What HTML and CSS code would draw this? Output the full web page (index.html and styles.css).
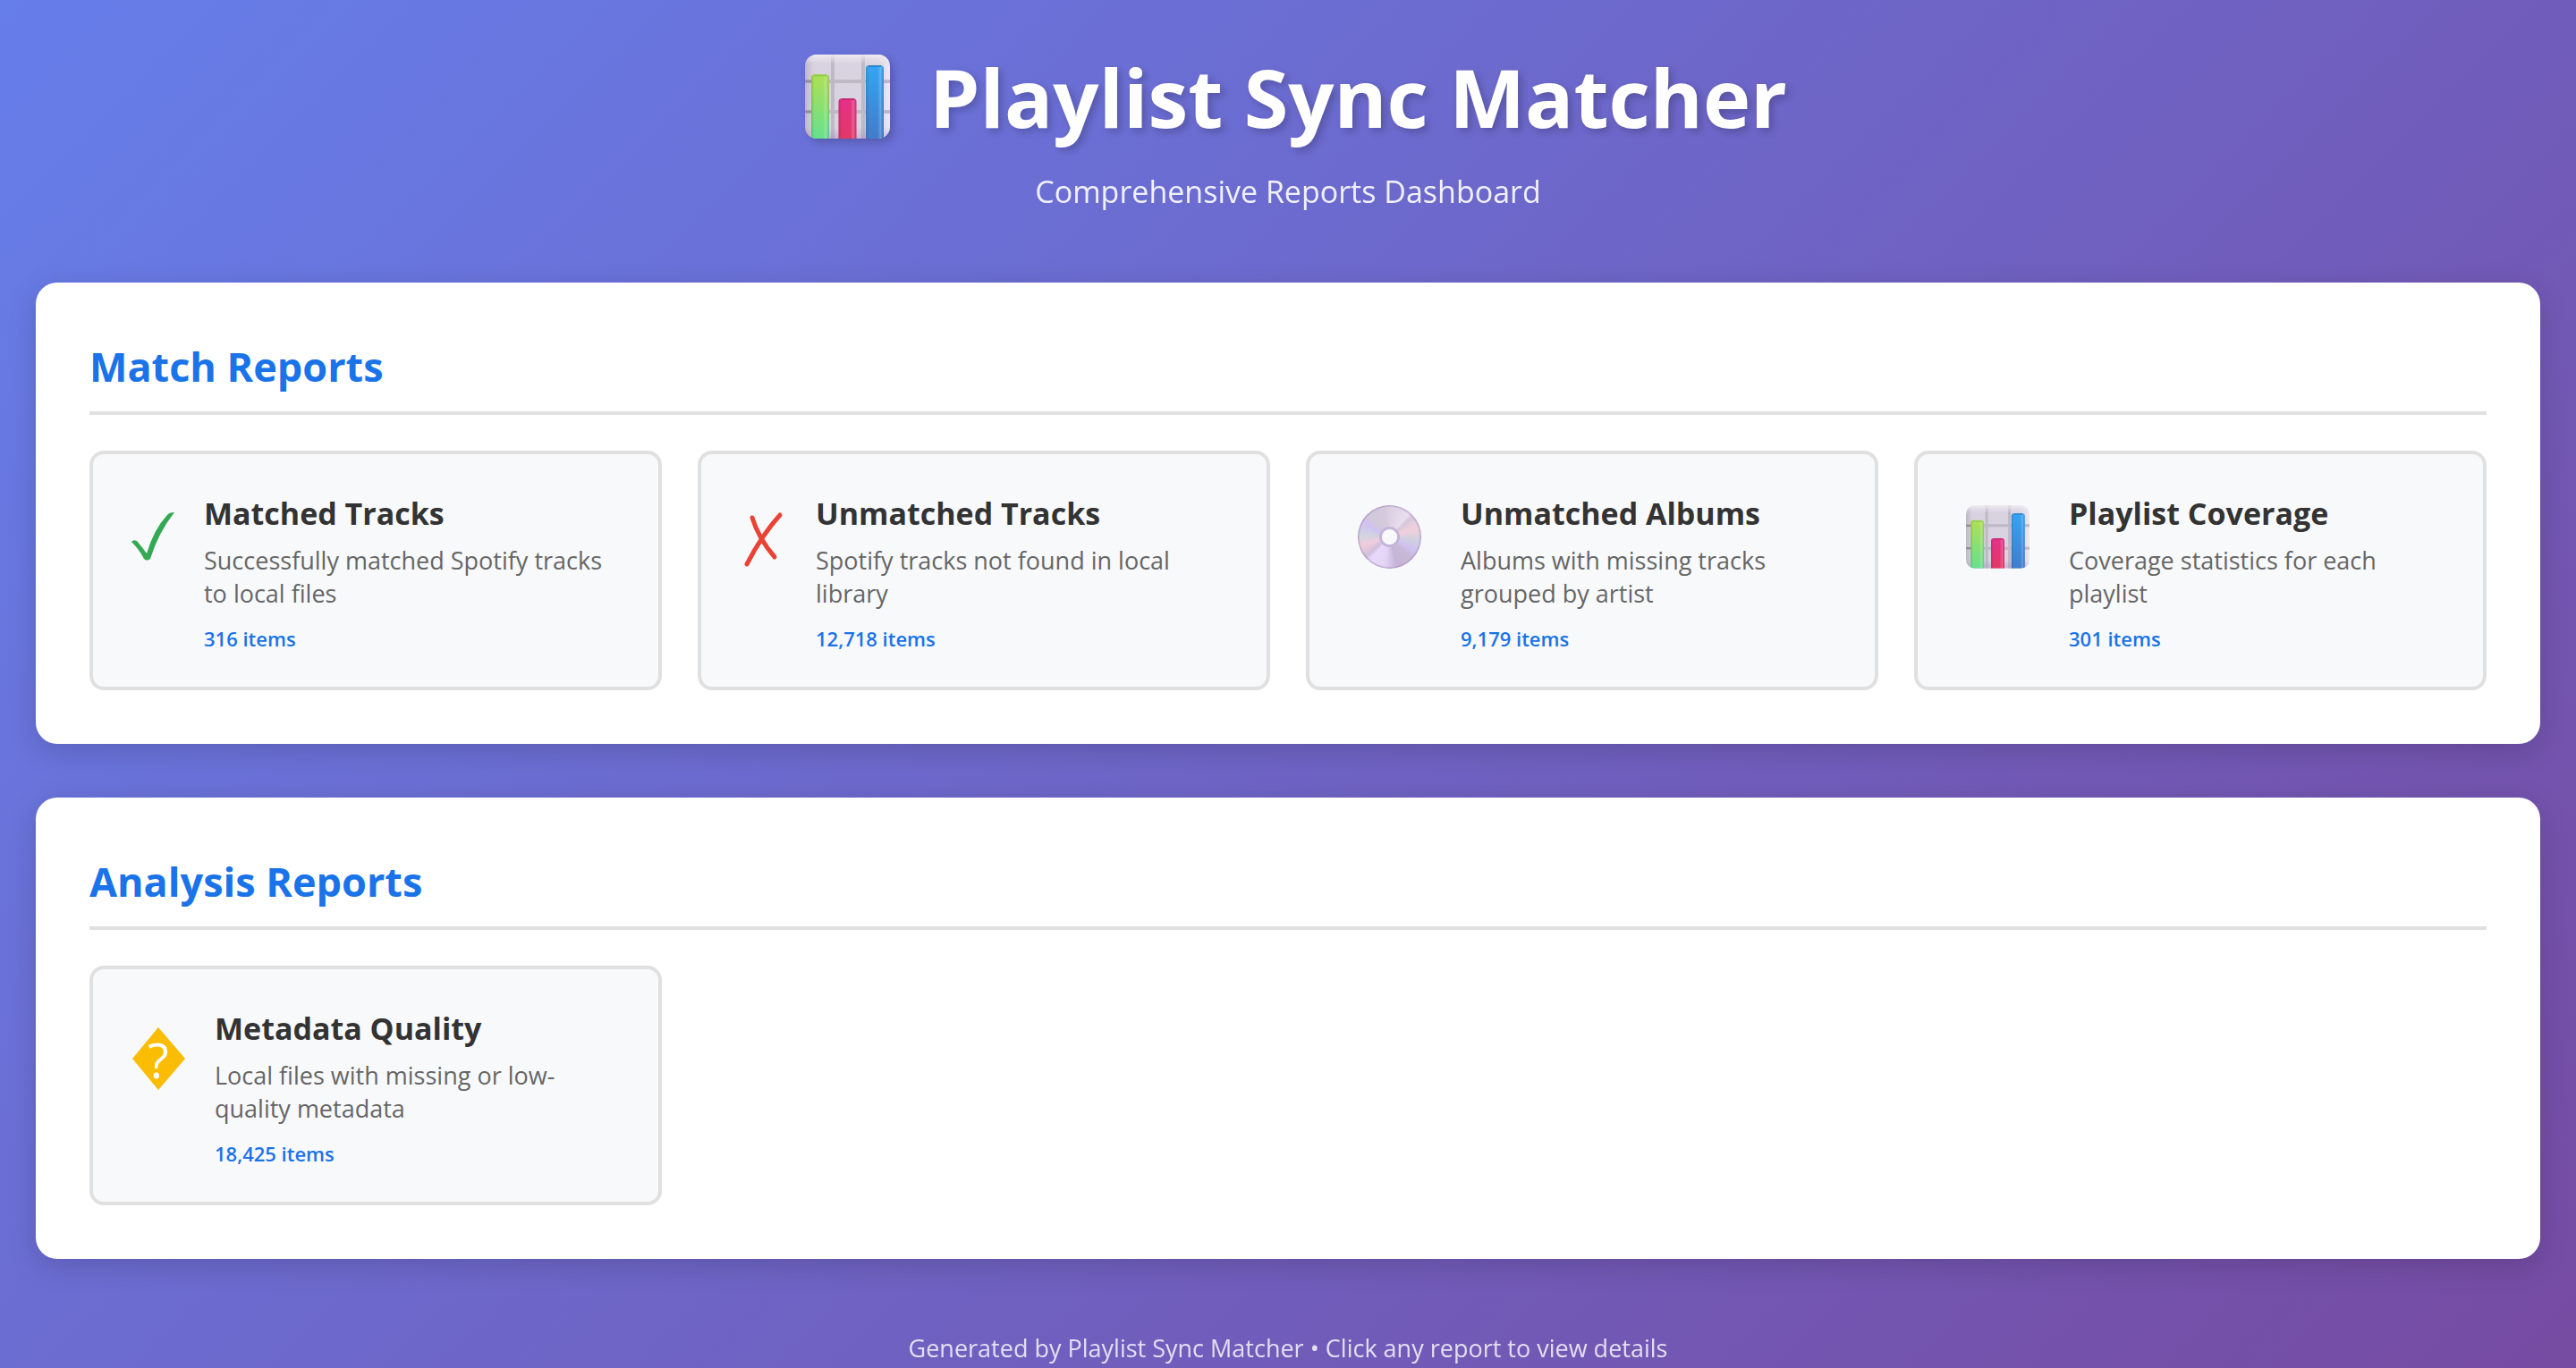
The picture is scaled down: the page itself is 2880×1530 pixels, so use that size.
FILE: index.html
```html
<!DOCTYPE html>
<html lang="en">
<head>
<meta charset="utf-8">
<meta name="viewport" content="width=device-width, initial-scale=1">
<title>Playlist Sync Matcher</title>
<link rel="stylesheet" href="styles.css">
</head>
<body>
<svg class="defs" aria-hidden="true">
  <defs>
    <linearGradient id="panel" x1="0" x2="1" y1="0" y2="0"><stop offset="0" stop-color="#bdb6c6"/><stop offset=".1" stop-color="#d8d2e0"/><stop offset=".85" stop-color="#dad4e2"/><stop offset="1" stop-color="#eee8f2"/></linearGradient>
    <linearGradient id="shine" x1="0" x2="0" y1="0" y2="1"><stop offset="0" stop-color="#f4f1f6" stop-opacity=".8"/><stop offset=".12" stop-color="#e8e4ec" stop-opacity="0"/><stop offset=".86" stop-color="#9a6cc0" stop-opacity="0"/><stop offset="1" stop-color="#9a6cc0" stop-opacity=".3"/></linearGradient>
    <linearGradient id="green" x1="0" x2="0" y1="0" y2="1"><stop offset="0" stop-color="#b0df55"/><stop offset="1" stop-color="#66e08e"/></linearGradient>
    <linearGradient id="pink" x1="0" x2="0" y1="0" y2="1"><stop offset="0" stop-color="#e6308a"/><stop offset="1" stop-color="#e23866"/></linearGradient>
    <linearGradient id="blue" x1="0" x2="0" y1="0" y2="1"><stop offset="0" stop-color="#35a4f4"/><stop offset="1" stop-color="#407ccc"/></linearGradient>
    <linearGradient id="edge" x1="0" x2="1" y1="0" y2="0"><stop offset="0" stop-color="#000" stop-opacity=".14"/><stop offset=".18" stop-color="#000" stop-opacity="0"/><stop offset=".65" stop-color="#fff" stop-opacity="0"/><stop offset=".84" stop-color="#fff" stop-opacity=".22"/><stop offset="1" stop-color="#000" stop-opacity=".08"/></linearGradient>
    <clipPath id="tile"><rect width="95" height="94" rx="13"/></clipPath>
  </defs>
  <symbol id="chart" viewBox="0 0 95 94">
    <g clip-path="url(#tile)">
      <rect width="95" height="94" fill="url(#panel)"/>
      <path d="M31 0v94M65 0v94M0 30h95M0 64h95" stroke="#bfb9c5" stroke-width="4" fill="none"/>
      <path d="M0 30h8M0 64h8" stroke="#948e9a" stroke-width="3"/>
      <rect width="95" height="94" fill="url(#shine)"/>
      <path d="M7 94V26q0-4 4-4h12q4 0 4 4v68z" fill="url(#green)"/>
      <path d="M7 94V26q0-4 4-4h12q4 0 4 4v68z" fill="url(#edge)"/>
      <path d="M10 23.500h14" stroke="#8ccc50" stroke-width="2"/>
      <path d="M37.500 94V53q0-4 4-4h12q4 0 4 4v41z" fill="url(#pink)"/>
      <path d="M37.500 94V53q0-4 4-4h12q4 0 4 4v41z" fill="url(#edge)"/>
      <path d="M41 50h14" stroke="#c02a6c" stroke-width="2"/>
      <path d="M68 94V16q0-4 4-4h12q4 0 4 4v78z" fill="url(#blue)"/>
      <path d="M68 94V16q0-4 4-4h12q4 0 4 4v78z" fill="url(#edge)"/>
      <path d="M71 13h14" stroke="#2c86cc" stroke-width="2"/>
    </g>
  </symbol>
</svg>

<header class="header">
  <h1 class="title"><svg class="title-icon" aria-hidden="true"><use href="#chart"/></svg>Playlist Sync Matcher</h1>
  <p class="subtitle">Comprehensive Reports Dashboard</p>
</header>

<main class="sections">
  <section class="section">
    <h2 class="section-title">Match Reports</h2>
    <div class="grid">
      <a class="card" href="#matched-tracks">
        <svg class="icon icon-check" viewBox="0 0 54 104" aria-hidden="true"><path d="M3 58Q5 55 9 57Q15 64 20 71Q28 44 43 28Q45 25 51 25Q33 48 24 77Q20 80 17 77Q12 67 3 58z" fill="#34a853"/></svg>
        <div class="card-body">
          <h3 class="card-title">Matched Tracks</h3>
          <p class="card-text">Successfully matched Spotify tracks to local files</p>
          <p class="card-count">316 items</p>
        </div>
      </a>
      <a class="card" href="#unmatched-tracks">
        <svg class="icon icon-cross" viewBox="0 0 58 104" aria-hidden="true"><path d="M17 31Q24 54 42 75M48 28Q28 50 11 83" fill="none" stroke="#ea4335" stroke-width="5" stroke-linecap="round"/></svg>
        <div class="card-body">
          <h3 class="card-title">Unmatched Tracks</h3>
          <p class="card-text">Spotify tracks not found in local library</p>
          <p class="card-count">12,718 items</p>
        </div>
      </a>
      <a class="card" href="#unmatched-albums">
        <span class="icon icon-wide"><span class="disc"></span></span>
        <div class="card-body">
          <h3 class="card-title">Unmatched Albums</h3>
          <p class="card-text">Albums with missing tracks grouped by artist</p>
          <p class="card-count">9,179 items</p>
        </div>
      </a>
      <a class="card" href="#playlist-coverage">
        <span class="icon icon-wide"><svg class="chart" aria-hidden="true"><use href="#chart"/></svg></span>
        <div class="card-body">
          <h3 class="card-title">Playlist Coverage</h3>
          <p class="card-text">Coverage statistics for each playlist</p>
          <p class="card-count">301 items</p>
        </div>
      </a>
    </div>
  </section>

  <section class="section">
    <h2 class="section-title">Analysis Reports</h2>
    <div class="grid">
      <a class="card" href="#metadata-quality">
        <svg class="icon icon-unknown" viewBox="0 0 66 104" aria-hidden="true"><path d="M33 25L63 60L33 95L4 60z" fill="#fbbc04"/><text class="mark" x="33" y="82" text-anchor="middle">?</text></svg>
        <div class="card-body">
          <h3 class="card-title">Metadata Quality</h3>
          <p class="card-text">Local files with missing or low-quality metadata</p>
          <p class="card-count">18,425 items</p>
        </div>
      </a>
    </div>
  </section>
</main>

<footer class="footer">Generated by Playlist Sync Matcher • Click any report to view details</footer>
</body>
</html>
```
FILE: styles.css
```css
* {
  box-sizing: border-box;
  margin: 0;
  padding: 0;
}

body {
  min-height: 100vh;
  padding: 44px 40px 0;
  background: linear-gradient(135deg, #667eea 0%, #764ba2 100%);
  color: #333;
  font-family: "Segoe UI", "Open Sans", "Noto Sans", sans-serif;
}

.defs {
  position: absolute;
  width: 0;
  height: 0;
}

.header {
  margin-bottom: 78px;
  color: #fff;
  text-align: center;
}

.title {
  display: flex;
  justify-content: center;
  align-items: center;
  gap: 44px;
  margin-bottom: 18px;
  padding-left: 18px;
  font-size: 90px;
  line-height: 128px;
  font-weight: 700;
  text-shadow: 4px 4px 8px rgba(0, 0, 0, 0.2);
}

.title-icon {
  width: 95px;
  height: 94px;
  filter: drop-shadow(4px 4px 4px rgba(0, 0, 0, 0.2));
}

.subtitle {
  font-size: 34px;
  line-height: 48px;
  opacity: 0.9;
}

.sections {
  display: flex;
  flex-direction: column;
  gap: 60px;
}

.section {
  padding: 62px 60px 60px;
  border-radius: 24px;
  background: #fff;
  box-shadow: 0 8px 32px rgba(0, 0, 0, 0.15);
}

.section-title {
  margin-bottom: 40px;
  padding-bottom: 18px;
  border-bottom: 4px solid #e0e0e0;
  color: #1a73e8;
  font-size: 45px;
  line-height: 64px;
  font-weight: 700;
}

.grid {
  display: grid;
  grid-template-columns: repeat(auto-fill, minmax(560px, 1fr));
  gap: 40px;
}

.card {
  display: flex;
  align-items: flex-start;
  gap: 30px;
  padding: 40px 40px 38px;
  border: 4px solid #e0e0e0;
  border-radius: 16px;
  background: #f8f9fb;
  color: inherit;
  text-decoration: none;
}

.card-body {
  flex: 1;
  padding-top: 2px;
}

.icon {
  flex: none;
  height: 104px;
}

.icon-check {
  width: 54px;
}

.icon-cross {
  width: 58px;
}

.icon-unknown {
  width: 66px;
}

.icon-wide {
  display: flex;
  justify-content: center;
  width: 99px;
  padding-top: 17px;
}

.chart {
  width: 71px;
  height: 71px;
}

.disc {
  width: 71px;
  height: 71px;
  border-radius: 50%;
  background:
    radial-gradient(circle, #f8f9fb 0 8px, #c4b4d8 9px 11px, transparent 12px 33px, rgba(160, 130, 185, 0.6) 35px),
    conic-gradient(#dcd0e2, #e8deee 40deg, #d4c8da 48deg, #ecd0dc 65deg, #eccfdb 78deg, #d0d2e0 95deg, #cfc0f0 120deg, #c8bad6 133deg, #c6b4d6 165deg, #e4d4f4 190deg, #e8d8fc 220deg, #d0c0da 230deg, #f0ccdc 252deg, #d0d4e0 275deg, #d0c0f2 300deg, #d2c8dc 312deg, #d4cadc 345deg, #dcd0e2);
}

.mark {
  fill: #fff;
  font-size: 54px;
  font-weight: 500;
}

.card-title {
  margin-bottom: 10px;
  font-size: 34px;
  line-height: 48px;
  font-weight: 700;
}

.card-text {
  margin-bottom: 16px;
  color: #666;
  font-size: 27px;
  line-height: 37px;
}

.card-count {
  color: #1a73e8;
  font-size: 22px;
  line-height: 32px;
  font-weight: 600;
}

.footer {
  padding-top: 81px;
  color: #fff;
  font-size: 27px;
  line-height: 37px;
  text-align: center;
  opacity: 0.8;
}
```
